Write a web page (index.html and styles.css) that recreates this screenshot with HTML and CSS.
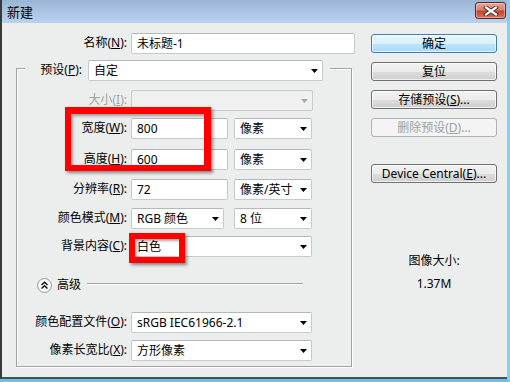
FILE: index.html
```html
<!DOCTYPE html>
<html lang="zh-CN">
<head>
<meta charset="utf-8">
<title>新建</title>
<link rel="stylesheet" href="styles.css">
</head>
<body>
<div class="window">
  <div class="inner">
    <div class="titlebar">
      <span class="title">新建</span>
      <div class="close"><svg width="16" height="10" viewBox="0 0 16 10"><path d="M3 1.5L13 8.5M13 1.5L3 8.5" stroke="#4a2a2a" stroke-width="4" stroke-linecap="square"/><path d="M3 1.5L13 8.5M13 1.5L3 8.5" stroke="#fff" stroke-width="2.2" stroke-linecap="square"/></svg></div>
    </div>
    <div class="body">
      <div class="left">
        <div class="row">
          <span class="lbl lbl-name">名称(<u>N</u>):</span>
          <div class="field w-name">未标题-1</div>
        </div>
        <div class="group">
          <div class="legend">
            <span class="lbl lbl-preset">预设(<u>P</u>):</span>
            <div class="field sel w-preset">自定<svg class="arr" width="7" height="4" viewBox="0 0 7 4"><path d="M0 0H7L3.5 4Z"/></svg></div>
          </div>
          <div class="row r-size">
            <span class="lbl lbl-g disabled">大小(<u>I</u>):</span>
            <div class="field sel dis w-size"><svg class="arr" width="7" height="4" viewBox="0 0 7 4"><path d="M0 0H7L3.5 4Z"/></svg></div>
          </div>
          <div class="row r-width">
            <span class="lbl lbl-g">宽度(<u>W</u>):</span>
            <div class="field w-num">800</div>
            <div class="field sel w-unit">像素<svg class="arr" width="7" height="4" viewBox="0 0 7 4"><path d="M0 0H7L3.5 4Z"/></svg></div>
          </div>
          <div class="row r-height">
            <span class="lbl lbl-g">高度(<u>H</u>):</span>
            <div class="field w-num">600</div>
            <div class="field sel w-unit">像素<svg class="arr" width="7" height="4" viewBox="0 0 7 4"><path d="M0 0H7L3.5 4Z"/></svg></div>
          </div>
          <div class="row r-res">
            <span class="lbl lbl-g">分辨率(<u>R</u>):</span>
            <div class="field w-num">72</div>
            <div class="field sel w-unit">像素/英寸<svg class="arr" width="7" height="4" viewBox="0 0 7 4"><path d="M0 0H7L3.5 4Z"/></svg></div>
          </div>
          <div class="row r-mode">
            <span class="lbl lbl-g">颜色模式(<u>M</u>):</span>
            <div class="field sel w-mode">RGB 颜色<svg class="arr" width="7" height="4" viewBox="0 0 7 4"><path d="M0 0H7L3.5 4Z"/></svg></div>
            <div class="field sel w-bits">8 位<svg class="arr" width="7" height="4" viewBox="0 0 7 4"><path d="M0 0H7L3.5 4Z"/></svg></div>
          </div>
          <div class="row r-bg">
            <span class="lbl lbl-g">背景内容(<u>C</u>):</span>
            <div class="field sel w-wide">白色<svg class="arr" width="7" height="4" viewBox="0 0 7 4"><path d="M0 0H7L3.5 4Z"/></svg></div>
          </div>
          <div class="adv">
            <span class="adv-btn"><svg width="15" height="15" viewBox="0 0 15 15"><circle cx="7.5" cy="7.5" r="7" fill="#f7f7f7" stroke="#9a9a9a"/><path d="M4.5 7L7.5 4.2L10.5 7M4.5 10.6L7.5 7.8L10.5 10.6" fill="none" stroke="#111" stroke-width="1.4"/></svg></span>
            <span class="adv-text">高级</span>
            <span class="adv-line"></span>
          </div>
          <div class="row r-profile">
            <span class="lbl lbl-g">颜色配置文件(<u>O</u>):</span>
            <div class="field sel w-wide">sRGB IEC61966-2.1<svg class="arr" width="7" height="4" viewBox="0 0 7 4"><path d="M0 0H7L3.5 4Z"/></svg></div>
          </div>
          <div class="row r-aspect">
            <span class="lbl lbl-g">像素长宽比(<u>X</u>):</span>
            <div class="field sel w-wide">方形像素<svg class="arr" width="7" height="4" viewBox="0 0 7 4"><path d="M0 0H7L3.5 4Z"/></svg></div>
          </div>
        </div>
      </div>
      <div class="right">
        <div class="btn default">确定</div>
        <div class="btn">复位</div>
        <div class="btn">存储预设(<u>S</u>)...</div>
        <div class="btn off">删除预设(<u>D</u>)...</div>
        <div class="btn dc">Device Central(<u>E</u>)...</div>
        <div class="info">
          <div class="info-label">图像大小:</div>
          <div class="info-value">1.37M</div>
        </div>
      </div>
    </div>
  </div>
  <div class="mark mark1"></div>
  <div class="mark mark2"></div>
</div>
</body>
</html>
```

FILE: styles.css
```css
* { box-sizing: border-box; }
html, body { margin: 0; padding: 0; }
body {
  width: 510px;
  height: 382px;
  background: #eceeed;
  font-family: "Noto Sans", "Noto Sans CJK SC", sans-serif;
  font-size: 12px;
  color: #000;
  overflow: hidden;
}
u { text-decoration: underline; text-underline-offset: 1px; }

.window {
  position: relative;
  width: 510px;
  height: 382px;
  border-right: 3px solid #86cdee;
  border-bottom: 3px solid #64c4ea;
  display: flex;
  flex-direction: column;
}
.inner {
  flex: 1;
  border-left: 2px solid #3a3a3a;
  border-bottom: 2px solid #4d4d4d;
  display: flex;
  flex-direction: column;
  background: #eceeed;
}

.titlebar {
  height: 23px;
  flex: none;
  background: linear-gradient(#9ab5d5, #b9d2ee);
  display: flex;
  align-items: center;
  justify-content: space-between;
  padding: 0 1px 0 5px;
}
.title { font-size: 13px; line-height: 16px; font-family: "Noto Sans CJK SC", sans-serif; }
.close {
  width: 31px;
  height: 17px;
  margin-top: -2px;
  border: 1px solid #5b2626;
  border-radius: 3px;
  background: linear-gradient(#e9a89a 0%, #d9806c 45%, #c4442c 55%, #d6735c 100%);
  display: flex;
  align-items: center;
  justify-content: center;
  box-shadow: inset 0 0 0 1px rgba(255,255,255,0.35);
}

.body { display: flex; flex: 1; }
.left { width: 355px; padding-top: 10px; flex: none; }
.right { width: 126px; margin-left: 14px; padding-top: 11px; display: flex; flex-direction: column; }

.row { display: flex; align-items: center; height: 21px; }
.lbl {
  text-align: right;
  white-space: nowrap;
  line-height: 16px;
  padding-bottom: 1px;
  flex: none;
}
.lbl-name { width: 125px; margin-right: 4px; }
.lbl-preset { width: 57px; margin-right: 6px; }
.lbl-g { width: 110px; margin-right: 4px; }
.disabled { color: #a3a3a3; }

.field {
  height: 21px;
  background: #fff;
  border: 1px solid #c6cacd;
  border-top-color: #b4b8bc;
  border-radius: 2px;
  padding: 0 4px 0 5px;
  display: flex;
  align-items: center;
  line-height: 16px;
  white-space: nowrap;
  flex: none;
}
.sel { justify-content: space-between; }
.arr { flex: none; fill: #000; }
.dis { background: #f0f0f0; border-color: #c8cacc; }
.dis .arr { fill: #a8a8a8; margin-left: auto; }

.w-name { width: 224px; }
.w-preset { width: 235px; }
.w-size { width: 182px; }
.w-num { width: 97px; margin-right: 6px; }
.w-unit { width: 78px; }
.w-mode { width: 93px; margin-right: 10px; }
.w-bits { width: 78px; }
.w-wide { width: 181px; }

.group {
  margin-top: 14px;
  margin-left: 14px;
  width: 336px;
  height: 299px;
  border: 1px solid #a2a2a2;
  box-shadow: 1px 1px 0 #fff, inset 1px 1px 0 #fff;
}
.legend {
  display: flex;
  align-items: center;
  height: 21px;
  margin-top: -9px;
  margin-left: 8px;
  width: 305px;
  padding-right: 7px;
  background: #eceeed;
}
.r-size { margin-top: 9px; }
.r-width { margin-top: 7px; }
.r-height { margin-top: 10px; }
.r-res { margin-top: 9px; }
.r-mode { margin-top: 8px; }
.r-bg { margin-top: 7px; }
.r-profile { margin-top: 19px; }
.r-aspect { margin-top: 7px; }

.adv {
  display: flex;
  align-items: center;
  height: 16px;
  margin-top: 20px;
  padding-left: 20px;
}
.adv-btn { width: 15px; height: 15px; display: flex; flex: none; }
.adv-text { margin-left: 5px; line-height: 16px; width: 30px; flex: none; }
.adv-line {
  width: 216px;
  height: 2px;
  border-top: 1px solid #a0a0a0;
  border-bottom: 1px solid #fff;
  margin-bottom: 3px;
  flex: none;
}

.btn {
  height: 19px;
  border: 1px solid #707070;
  border-radius: 3px;
  background: linear-gradient(#f2f2f2 0%, #ebebeb 50%, #dddddd 51%, #cfcfcf 100%);
  box-shadow: inset 0 0 0 1px rgba(255,255,255,0.7);
  display: flex;
  align-items: center;
  justify-content: center;
  line-height: 16px;
  margin-bottom: 9px;
  white-space: nowrap;
}
.btn.default {
  border-color: #3c7fb1;
  background: linear-gradient(#eaf6fd 0%, #d9f0fc 50%, #bee6fd 51%, #a7d9f5 100%);
}
.btn.off {
  color: #a0a0a0;
  border-color: #adb2b5;
  background: #f4f4f4;
  box-shadow: none;
}
.btn.dc { margin-top: 18px; }

.info { text-align: center; margin-top: 61px; line-height: 16px; }
.info-value { margin-top: 7px; }

.mark {
  position: absolute;
  border: 7px solid #ff0000;
  box-shadow: 2px 2px 3px rgba(0,0,0,0.45), inset 2px 2px 3px rgba(0,0,0,0.35);
}
.mark1 { left: 65px; top: 107px; width: 146px; height: 64px; border-left-width: 6px; border-bottom-width: 6px; }
.mark2 { left: 129px; top: 233px; width: 56px; height: 30px; border-width: 6px; }
```
